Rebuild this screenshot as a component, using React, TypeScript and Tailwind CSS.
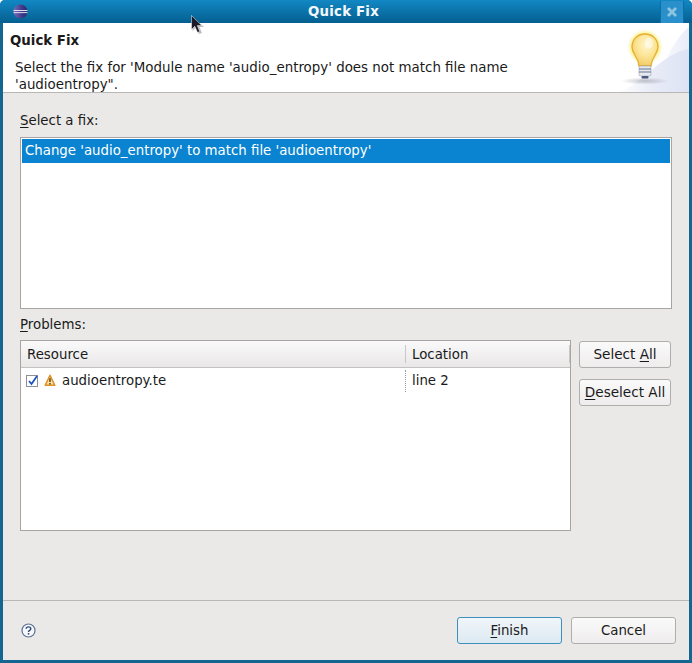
function Cursor() {
  return (
    <svg className="absolute left-[190px] top-[14px]" width="14" height="22" viewBox="0 0 14 22">
      <path d="M2.5 2.5 L2.5 17 L6 13.5 L9 20 L12 19 L9.5 13 L14 13 Z" fill="#000" opacity="0.25" />
      <path d="M1.5 1.5 L1.5 15.5 L4.8 12.3 L7.5 18.5 L9.8 17.5 L7.3 11.6 L11.8 11.6 Z" fill="#1a1a2a" stroke="#fff" strokeWidth="0.5" />
    </svg>
  );
}

function EclipseLogo() {
  return (
    <svg width="15" height="15" viewBox="0 0 15 15">
      <defs>
        <linearGradient id="ecl" x1="0" y1="0" x2="1" y2="0">
          <stop offset="0" stopColor="#7a6cc0" />
          <stop offset="0.6" stopColor="#3f3a88" />
          <stop offset="1" stopColor="#2b2a70" />
        </linearGradient>
      </defs>
      <circle cx="7.5" cy="7.5" r="7" fill="url(#ecl)" />
      <rect x="0.5" y="6" width="14" height="0.9" fill="#f1eef8" />
      <rect x="0.5" y="8.2" width="14" height="0.9" fill="#f1eef8" />
    </svg>
  );
}

function Banner() {
  return (
    <svg width="72" height="69" viewBox="0 0 72 69" className="block">
      <defs>
        <radialGradient id="glow" cx="0.5" cy="0.5" r="0.5">
          <stop offset="0.72" stopColor="#fbef80" />
          <stop offset="1" stopColor="#fdf6b0" stopOpacity="0" />
        </radialGradient>
        <radialGradient id="glass" cx="0.55" cy="0.35" r="0.7">
          <stop offset="0" stopColor="#fff6d0" />
          <stop offset="0.5" stopColor="#fbe596" />
          <stop offset="1" stopColor="#f2c860" />
        </radialGradient>
        <radialGradient id="shadow" cx="0.5" cy="0.5" r="0.5">
          <stop offset="0" stopColor="#9a9aa8" stopOpacity="0.6" />
          <stop offset="1" stopColor="#9a9aa8" stopOpacity="0" />
        </radialGradient>
        <linearGradient id="bgA" x1="0" y1="0" x2="1" y2="0">
          <stop offset="0" stopColor="#ffffff" />
          <stop offset="1" stopColor="#e9edf8" />
        </linearGradient>
        <linearGradient id="bgB" x1="0" y1="0" x2="1" y2="0">
          <stop offset="0" stopColor="#ffffff" />
          <stop offset="0.5" stopColor="#e8ecf7" />
          <stop offset="1" stopColor="#dde3f4" />
        </linearGradient>
      </defs>
      <path d="M34 69 C44 50 54 18 72 4 V69 Z" fill="url(#bgA)" />
      <path d="M0 69 C24 64 44 30 72 26 V69 Z" fill="url(#bgB)" />
      <ellipse cx="28" cy="58" rx="24" ry="3.5" fill="url(#shadow)" />
      <circle cx="28" cy="24" r="18" fill="url(#glow)" />
      <path d="M28 11 C20 11 15 17 15 24 C15 31 21 33 22 43 L34 43 C35 33 41 31 41 24 C41 17 36 11 28 11 Z" fill="url(#glass)" stroke="#e5ae30" strokeWidth="1.3" />
      <ellipse cx="32" cy="20" rx="4" ry="5.5" fill="#fff" opacity="0.5" />
      <rect x="22" y="43" width="12" height="10" rx="1" fill="#e6e9ef" stroke="#8b97ac" strokeWidth="0.5" />
      <path d="M22 46 H34 M22 49 H34" stroke="#66758f" strokeWidth="1" />
      <rect x="24.5" y="53" width="7" height="2.5" rx="1" fill="#4a5a7a" />
    </svg>
  );
}

function Ul({ children }: { children: string }) {
  return <span className="underline underline-offset-2">{children}</span>;
}

function SmallButton({ children }: { children: React.ReactNode }) {
  return (
    <button className="flex h-[27px] w-[92px] items-center justify-center rounded-[3px] border border-[#b0aeab] bg-gradient-to-b from-[#fbfafa] to-[#eeecec] pb-[2px] text-[13.6px] text-[#1a1a1a]">
      <span>{children}</span>
    </button>
  );
}

export default function App() {
  return (
    <div
      className="relative flex h-[663px] w-[692px] flex-col overflow-hidden rounded-t-[5px] bg-[#12668f] text-[13.33px] leading-[16px] text-[#1a1a1a]"
      style={{ fontFamily: '"DejaVu Sans", sans-serif' }}
    >
      <div className="flex h-[23px] shrink-0 items-center bg-gradient-to-b from-[#1288c4] to-[#055f90] pl-[13px]">
        <EclipseLogo />
        <div className="flex-1 pr-[1px] text-center text-[13.33px] font-bold tracking-[0.2px] text-[#f4f8fb]">Quick Fix</div>
        <div className="mr-[8px] flex h-[22px] w-[24px] items-center justify-center border-x border-[#0a6ea8] bg-[#2a90cc]">
          <svg width="12" height="12" viewBox="0 0 12 12">
            <path d="M2 2 L10 10 M10 2 L2 10" stroke="#8fc4e0" strokeWidth="2.8" />
          </svg>
        </div>
      </div>

      <div className="mx-[3px] mb-[3px] flex min-h-0 flex-1 flex-col bg-[#eae9e7]">
        <div className="flex h-[70px] shrink-0 border-b border-[#b9b7b3] bg-white">
          <div className="flex-1 pl-[7px]">
            <div className="mt-[10px] text-[13.33px] font-bold">Quick Fix</div>
            <div className="ml-[5px] mt-[10px] whitespace-pre-line text-[13.4px] leading-[17px]">
              {"Select the fix for 'Module name 'audio_entropy' does not match file name\n'audioentropy\"."}
            </div>
          </div>
          <div className="w-[72px] shrink-0 overflow-hidden">
            <Banner />
          </div>
        </div>

        <div className="flex min-h-0 flex-1 flex-col px-[17px] pt-[20px]">
          <div className="leading-[16px]"><Ul>S</Ul>elect a fix:</div>
          <div className="mt-[8px] h-[172px] w-[652px] border border-[#a9a3a3] bg-white p-px">
            <div className="flex h-[24px] items-center bg-[#0a84d0] pl-[3px] text-white">
              Change 'audio_entropy' to match file 'audioentropy'
            </div>
          </div>
          <div className="mt-[8px] leading-[16px]"><Ul>P</Ul>roblems:</div>
          <div className="mt-[7px] flex gap-[8px]">
            <div className="h-[191px] w-[551px] border border-[#a9a3a3] bg-white">
              <div className="flex h-[27px] items-center border-b border-[#c4c1bf] bg-gradient-to-b from-[#fbfafa] to-[#e9e7e7]">
                <div className="flex h-[18px] w-[384px] items-center pl-[6px] pt-[2px]">Resource</div>
                <div className="flex h-[18px] flex-1 items-center border-x border-[#c9c7c5] pl-[6px] pt-[2px]">Location</div>
              </div>
              <div className="flex h-[25px] items-center">
                <div className="flex w-[384px] items-center pl-[5px]">
                  <svg width="13" height="13" viewBox="0 0 13 13" className="shrink-0">
                    <rect x="0.5" y="1.5" width="11" height="11" fill="#fff" stroke="#8a8f98" />
                    <path d="M3 7 L5.5 10 L11 2" fill="none" stroke="#1a50c8" strokeWidth="1.7" />
                  </svg>
                  <svg width="12" height="13" viewBox="0 0 12 13" className="ml-[5px] shrink-0">
                    <path d="M6 1.2 L10.8 11.3 L1.2 11.3 Z" fill="#fbdf9a" stroke="#dc8f24" strokeWidth="1.5" strokeLinejoin="round" />
                    <path d="M6 4.2 V8 M6 9 V10.4" stroke="#40300a" strokeWidth="1.3" />
                  </svg>
                  <span className="ml-[6px]">audioentropy.te</span>
                </div>
                <div className="flex h-[22px] items-center border-l border-dotted border-[#9a9a9a] pl-[6px]">line 2</div>
              </div>
            </div>
            <div className="flex flex-col gap-[11px] pt-px">
              <SmallButton>Select <Ul>A</Ul>ll</SmallButton>
              <SmallButton><Ul>D</Ul>eselect All</SmallButton>
            </div>
          </div>
        </div>

        <div className="flex h-[60px] shrink-0 items-start border-t border-[#b9b7b3] pl-[18px] pr-[13px] pt-[16px]">
          <svg width="15" height="15" viewBox="0 0 15 15" className="mt-[6px]">
            <circle cx="7.5" cy="7.5" r="6.5" fill="#f6f8fc" stroke="#5a7096" strokeWidth="1.2" />
            <path d="M5.2 5.8 C5.2 3.2 9.8 3.2 9.8 5.8 C9.8 7.5 7.5 7.4 7.5 9" fill="none" stroke="#2f4a78" strokeWidth="1.4" />
            <rect x="6.8" y="10" width="1.5" height="1.6" fill="#2f4a78" />
          </svg>
          <div className="ml-auto flex gap-[9px]">
            <button className="flex h-[27px] w-[105px] items-center justify-center rounded-[3px] border border-[#3f8fbd] bg-gradient-to-b from-[#f0f6fa] to-[#dce9f1] text-[#1a1a1a]">
              <span><Ul>F</Ul>inish</span>
            </button>
            <button className="flex h-[27px] w-[105px] items-center justify-center rounded-[3px] border border-[#b0aeab] bg-gradient-to-b from-[#fbfafa] to-[#eeecec] text-[#1a1a1a]">
              Cancel
            </button>
          </div>
        </div>
      </div>
      <Cursor />
    </div>
  );
}
